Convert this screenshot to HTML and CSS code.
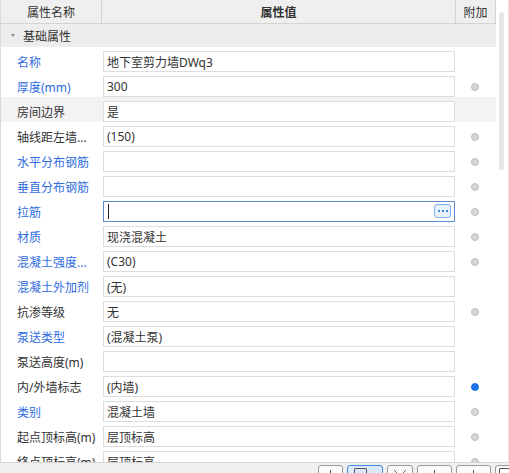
FILE: index.html
```html
<!DOCTYPE html>
<html>
<head>
<meta charset="utf-8">
<link rel="stylesheet" href="styles.css">
</head>
<body>
<div class="app">
  <div class="main">
    <div class="grid">
      <div class="head">
        <div class="hc c-name">属性名称</div>
        <div class="hc c-val">属性值</div>
        <div class="hc c-add">附加</div>
      </div>
      <div class="group"><span class="tri"></span>基础属性</div>
      <div class="row"><div class="lbl blue">名称</div><div class="val"><div class="box">地下室剪力墙DWq3</div></div><div class="add"></div></div>
      <div class="row"><div class="lbl blue">厚度(mm)</div><div class="val"><div class="box">300</div></div><div class="add"><span class="dot"></span></div></div>
      <div class="row hover"><div class="lbl">房间边界</div><div class="val"><div class="box">是</div></div><div class="add"></div></div>
      <div class="row"><div class="lbl">轴线距左墙...</div><div class="val"><div class="box">(150)</div></div><div class="add"><span class="dot"></span></div></div>
      <div class="row"><div class="lbl blue">水平分布钢筋</div><div class="val"><div class="box"></div></div><div class="add"><span class="dot"></span></div></div>
      <div class="row"><div class="lbl blue">垂直分布钢筋</div><div class="val"><div class="box"></div></div><div class="add"><span class="dot"></span></div></div>
      <div class="row"><div class="lbl blue">拉筋</div><div class="val"><div class="box focus"><span class="caret"></span><span class="more"><i></i><i></i><i></i></span></div></div><div class="add"><span class="dot"></span></div></div>
      <div class="row"><div class="lbl blue">材质</div><div class="val"><div class="box">现浇混凝土</div></div><div class="add"><span class="dot"></span></div></div>
      <div class="row"><div class="lbl blue">混凝土强度...</div><div class="val"><div class="box">(C30)</div></div><div class="add"><span class="dot"></span></div></div>
      <div class="row"><div class="lbl blue">混凝土外加剂</div><div class="val"><div class="box">(无)</div></div><div class="add"></div></div>
      <div class="row"><div class="lbl">抗渗等级</div><div class="val"><div class="box">无</div></div><div class="add"><span class="dot"></span></div></div>
      <div class="row"><div class="lbl blue">泵送类型</div><div class="val"><div class="box">(混凝土泵)</div></div><div class="add"></div></div>
      <div class="row"><div class="lbl">泵送高度(m)</div><div class="val"><div class="box"></div></div><div class="add"></div></div>
      <div class="row"><div class="lbl">内/外墙标志</div><div class="val"><div class="box">(内墙)</div></div><div class="add"><span class="dot on"></span></div></div>
      <div class="row"><div class="lbl blue">类别</div><div class="val"><div class="box">混凝土墙</div></div><div class="add"><span class="dot"></span></div></div>
      <div class="row"><div class="lbl">起点顶标高(m)</div><div class="val"><div class="box">层顶标高</div></div><div class="add"><span class="dot"></span></div></div>
      <div class="row"><div class="lbl">终点顶标高(m)</div><div class="val"><div class="box">层顶标高</div></div><div class="add"><span class="dot"></span></div></div>
    </div>
    <div class="vscroll"><div class="thumb"></div></div>
  </div>
  <div class="toolbar">
    <div class="tb b1"><span class="vl"></span></div>
    <div class="tb b2 sel"><span class="rc"></span></div>
    <div class="tb b3"><svg width="16" height="8" viewBox="0 0 16 8"><path d="M2 2 L7 7 M14 2 L9 7" stroke="#666" stroke-width="1" fill="none"/></svg></div>
    <div class="tb b4"><span class="vl"></span></div>
    <div class="tb b5"><span class="vl"></span></div>
    <div class="tb b6"><span class="rc"></span></div>
  </div>
</div>
</body>
</html>
```

FILE: styles.css
```css
* { box-sizing: border-box; }
html, body { margin: 0; padding: 0; background: #ffffff; }
body {
  font-family: "Noto Sans", "Noto Sans CJK SC", sans-serif;
  font-size: 12px;
  color: #333333;
}
.app {
  width: 509px;
  height: 473px;
  overflow: hidden;
  background: #ffffff;
}
.main {
  display: flex;
  height: 462px;
  overflow: hidden;
}
.grid {
  width: 496px;
  flex: none;
  border-left: 1px solid #d9d9d9;
  overflow: hidden;
}
.head {
  display: flex;
  height: 24px;
  background: #efefef;
  border-bottom: 1px solid #d4d4d4;
}
.hc {
  display: flex;
  align-items: center;
  justify-content: center;
  height: 23px;
  padding-top: 1px;
  border-right: 1px solid #d4d4d4;
  color: #333333;
}
.c-name { width: 101px; }
.c-val { width: 354px; font-weight: bold; }
.c-add { width: 40px; }
.group {
  display: flex;
  align-items: center;
  height: 23px;
  background: #ededed;
  padding-left: 10px;
  padding-top: 1px;
  color: #333333;
}
.tri {
  width: 0;
  height: 0;
  border-left: 2.5px solid transparent;
  border-right: 2.5px solid transparent;
  border-top: 3px solid #8a8a8a;
  margin-right: 8px;
  margin-top: -1px;
}
.row {
  display: flex;
  height: 25px;
  padding-top: 4px;
}
.row.hover { background: #f3f3f3; }
.lbl {
  width: 101px;
  height: 21px;
  padding-left: 16px;
  display: flex;
  align-items: center;
  white-space: nowrap;
  overflow: hidden;
  color: #333333;
}
.lbl.blue { color: #2f6ce0; }
.val {
  width: 354px;
  padding-left: 1px;
}
.box {
  width: 352px;
  height: 21px;
  border: 1px solid #dddddd;
  background: #ffffff;
  padding-left: 3px;
  display: flex;
  align-items: center;
  white-space: nowrap;
  color: #333333;
  position: relative;
}
.box.focus { border-color: #5f8acb; }
.caret {
  width: 1px;
  height: 15px;
  background: #222222;
  margin-left: 1px;
}
.more {
  position: absolute;
  right: 3px;
  top: 2px;
  width: 17px;
  height: 14px;
  border: 1px solid #7db1ee;
  border-radius: 3px;
  background: #e9f1fc;
  display: flex;
  align-items: center;
  justify-content: center;
  gap: 2px;
}
.more i {
  display: block;
  width: 2px;
  height: 2px;
  background: #3a8ee6;
}
.add {
  width: 40px;
  height: 21px;
  display: flex;
  align-items: center;
  justify-content: center;
  padding-right: 2px;
}
.dot {
  width: 8px;
  height: 8px;
  border-radius: 50%;
  background: #d6d6d6;
  border: 1px solid #bfbfbf;
}
.dot.on {
  background: #1a73e8;
  border-color: #1a6fe0;
}
.vscroll {
  width: 13px;
  flex: none;
  border-right: 1px solid #e2e2e2;
  padding-left: 3px;
  padding-top: 12px;
}
.thumb {
  width: 5px;
  height: 158px;
  border-radius: 3px;
  background: #e6e6e6;
}
.toolbar {
  height: 11px;
  background: #f0f0f0;
  border-top: 1px solid #d6d6d6;
  display: flex;
  gap: 4px;
  padding-left: 318px;
  padding-top: 2px;
}
.tb {
  flex: none;
  height: 20px;
  border: 1px solid #9a9a9a;
  border-radius: 3px;
  background: #fbfbfb;
  display: flex;
  justify-content: center;
  padding-top: 2px;
}
.tb.sel {
  border-color: #3c8be6;
  background: #dce9fb;
}
.b1 { width: 25px; }
.b2 { width: 36px; }
.b3 { width: 26px; }
.b4 { width: 35px; }
.b5 { width: 35px; }
.b6 { width: 20px; }
.vl {
  display: block;
  width: 1px;
  height: 8px;
  margin-top: 2px;
  background: #555555;
}
.rc {
  display: block;
  width: 13px;
  height: 8px;
  border: 1px solid #555555;
  border-radius: 1px;
  margin-top: 0px;
}
.b2 .rc { margin-right: 10px; }
```
